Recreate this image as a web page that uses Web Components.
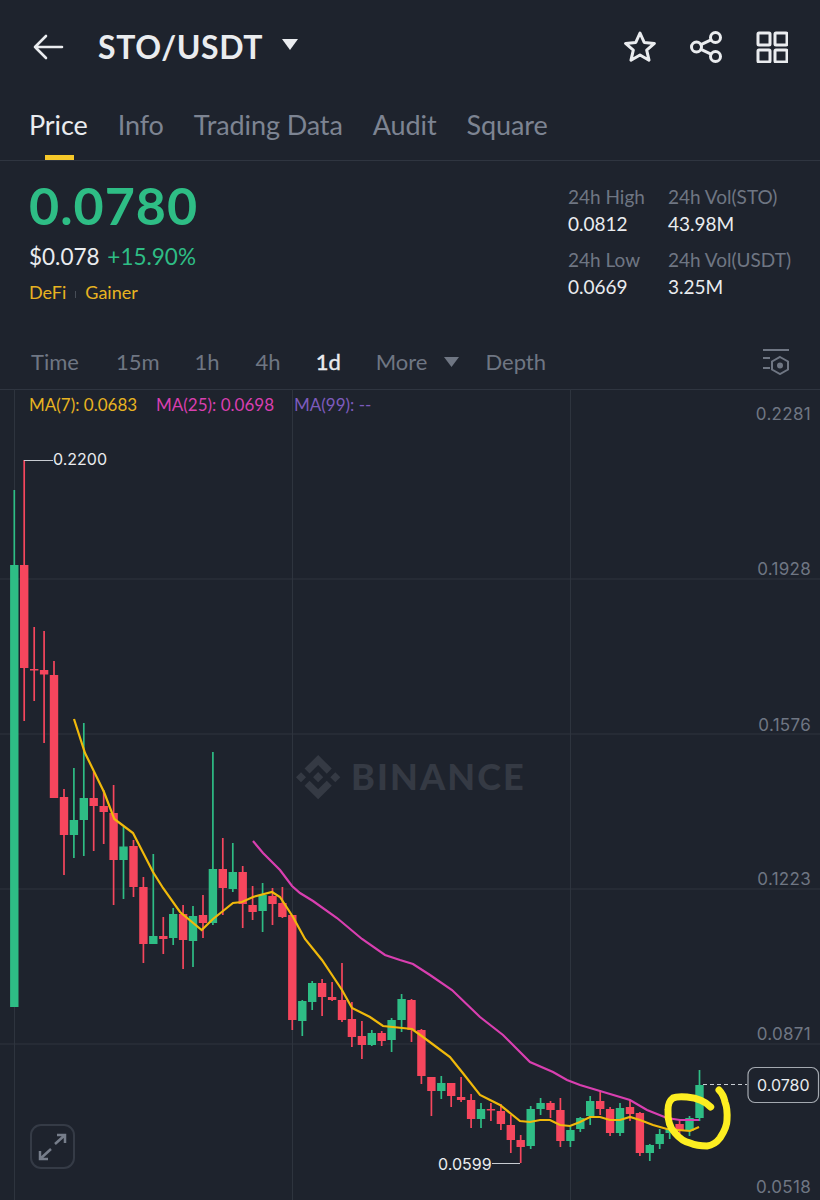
<!DOCTYPE html>
<html>
<head>
<meta charset="utf-8">
<title>STO/USDT</title>
<style>
  html, body { margin: 0; padding: 0; background: #1e232d; }
  body { width: 820px; height: 1200px; overflow: hidden; font-family: Lato, "Liberation Sans", sans-serif; color: #eaecef; }
</style>
</head>
<body>
<pair-header pair="STO/USDT"></pair-header>
<market-tabs items="Price,Info,Trading Data,Audit,Square" active="Price"></market-tabs>
<price-summary>
  <stat-item slot="stats" label="24h High" value="0.0812"></stat-item>
  <stat-item slot="stats" label="24h Vol(STO)" value="43.98M"></stat-item>
  <stat-item slot="stats" label="24h Low" value="0.0669"></stat-item>
  <stat-item slot="stats" label="24h Vol(USDT)" value="3.25M"></stat-item>
</price-summary>
<interval-bar></interval-bar>
<kline-chart></kline-chart>

<script>
class PairHeader extends HTMLElement {
  constructor() {
    super();
    this.attachShadow({ mode: "open" });
  }

  connectedCallback() {
    this.shadowRoot.innerHTML = `
      <style>
        :host { display: flex; align-items: center; height: 94px; padding: 0 32px 0 33px; box-sizing: border-box; }
        svg { display: block; fill: none; stroke: #eaecef; stroke-width: 3; stroke-linejoin: round; stroke-linecap: round; }
        .back { margin-right: 34px; stroke-width: 2.600; }
        h1 { margin: 0; font: 700 32px/1 Lato, sans-serif; letter-spacing: 0.600px; color: #eaecef; }
        .caret { margin: -6px 0 0 19px; fill: #eaecef; stroke: none; }
        .icons { margin-left: auto; display: flex; gap: 34px; }
      </style>
      <svg class="back" width="31" height="26" viewBox="0 0 31 26"><path d="M29 13H2M13 2 2 13l11 11"/></svg>
      <h1>${this.getAttribute("pair")}</h1>
      <svg class="caret" width="16" height="11" viewBox="0 0 16 11"><path d="M0 0h16l-8 11z"/></svg>
      <div class="icons">
        <svg width="32" height="32" viewBox="0 0 32 32"><path d="M16 2l4.200 9.400 10.200 1-7.700 6.800 2.300 10-9-5.200-9 5.200 2.300-10-7.700-6.800 10.200-1z"/></svg>
        <svg width="32" height="32" viewBox="0 0 32 32"><circle cx="6.500" cy="16" r="5"/><circle cx="25.500" cy="6.500" r="5"/><circle cx="25.500" cy="25.500" r="5"/><path d="M11 13.700 21 8.800M11 18.300l10 4.900"/></svg>
        <svg width="32" height="32" viewBox="0 0 32 32"><rect x="2" y="2" width="12" height="12" rx="1"/><rect x="19" y="2" width="12" height="12" rx="1"/><rect x="2" y="19" width="12" height="12" rx="1"/><rect x="19" y="19" width="12" height="12" rx="1"/></svg>
      </div>`;
  }
}

class MarketTabs extends HTMLElement {
  constructor() {
    super();
    this.attachShadow({ mode: "open" });
  }

  connectedCallback() {
    const active = this.getAttribute("active");
    const tabs = this.getAttribute("items").split(",").map((name) =>
      `<span class="tab ${name === active ? "on" : ""}">${name}</span>`).join("");
    this.shadowRoot.innerHTML = `
      <style>
        :host { display: flex; gap: 30px; height: 67px; padding: 14px 0 0 29px; box-sizing: border-box; border-bottom: 1px solid #2f3540; }
        .tab { position: relative; font: 400 27px/34px Lato, sans-serif; letter-spacing: -0.100px; color: #7d8492; }
        .on { color: #eaecef; }
        .on::after { content: ""; position: absolute; left: 16px; width: 29px; top: 47px; height: 5px; background: #f6c829; }
      </style>${tabs}`;
  }
}

class StatItem extends HTMLElement {
  constructor() {
    super();
    this.attachShadow({ mode: "open" });
  }

  connectedCallback() {
    this.shadowRoot.innerHTML = `
      <style>
        :host { display: block; font: 400 19px/27px Lato, sans-serif; white-space: nowrap; }
        .label { color: #6f7683; }
        .value { color: #eaecef; }
      </style>
      <div class="label">${this.getAttribute("label")}</div>
      <div class="value">${this.getAttribute("value")}</div>`;
  }
}

class PriceSummary extends HTMLElement {
  constructor() {
    super();
    this.attachShadow({ mode: "open" });
  }

  connectedCallback() {
    this.shadowRoot.innerHTML = `
      <style>
        :host { display: flex; justify-content: space-between; height: 179px; box-sizing: border-box; padding: 19px 0 0 29px; }
        .price { font: 700 52px/50px Lato, sans-serif; letter-spacing: 1px; color: #2ebd85; }
        .sub { margin-top: 13px; font: 400 22.500px/28px Lato, sans-serif; color: #eaecef; }
        .sub b { font-weight: 400; color: #2ebd85; margin-left: 2px; }
        .tags { display: flex; align-items: center; margin-top: 7px; font: 400 18px/28px Lato, sans-serif; color: #e8b321; }
        .tags i { width: 1px; height: 7px; margin: 5px 9px 0; background: #474d57; }
        .stats { display: grid; grid-template-columns: 100px 152px; row-gap: 9px; align-content: start; margin-top: 3px; }
      </style>
      <div>
        <div class="price">0.0780</div>
        <div class="sub">$0.078 <b>+15.90%</b></div>
        <div class="tags"><span>DeFi</span><i></i><span>Gainer</span></div>
      </div>
      <div class="stats"><slot name="stats"></slot></div>`;
  }
}

class IntervalBar extends HTMLElement {
  constructor() {
    super();
    this.attachShadow({ mode: "open" });
  }

  connectedCallback() {
    this.shadowRoot.innerHTML = `
      <style>
        :host { display: flex; align-items: center; height: 49px; box-sizing: border-box; padding: 0 30px 5px 31px; font: 400 22px/30px Lato, sans-serif; color: #6f7683; }
        span { margin-right: 35px; }
        span:nth-of-type(1) { margin-right: 37px; }
        span:nth-of-type(3) { margin-right: 36px; }
        .on { color: #eaecef; -webkit-text-stroke: 0.400px #eaecef; }
        .more { margin-right: 0; }
        .caret { margin: 0 26px 0 17px; fill: #6f7683; }
        .tool { margin-left: auto; fill: none; stroke: #6f7683; stroke-width: 2; }
      </style>
      <span>Time</span><span>15m</span><span>1h</span><span>4h</span><span class="on">1d</span>
      <span class="more">More</span>
      <svg class="caret" width="15" height="10" viewBox="0 0 15 10"><path d="M0 0h15l-7.500 10z"/></svg>
      <span>Depth</span>
      <svg class="tool" width="29" height="26" viewBox="0 0 29 26"><path d="M2 1h26M2 9h7M2 19h7"/><path d="M19 8l8 4.500v8L19 25l-8-4.500v-8z"/><circle cx="19" cy="16.500" r="2" fill="#6f7683"/></svg>`;
  }
}

// high, body top, body bottom, low, up
const CANDLES = [
  [490, 565, 1007, 1007, 1], [460, 565, 668, 721, 0], [627, 669, 670, 701, 0], [631, 670, 674.5, 743, 0],
  [661, 675, 798, 798, 0], [789, 797, 835, 875, 0], [768, 820, 835, 858, 1], [723, 798, 820, 856, 1],
  [772, 798, 806, 851, 0], [790, 806, 812, 844, 0], [785, 813, 860, 905, 0], [827, 846.5, 860, 899, 1],
  [840, 846, 887, 897, 0], [877, 887, 944, 963, 0], [854, 936, 944, 944, 1], [917, 936, 939, 954, 0],
  [908, 914, 938, 945, 1], [905, 914, 940, 969, 0], [906, 916, 941, 967, 1], [895, 915, 923, 938, 0],
  [752, 869, 923, 925, 1], [838, 869, 888, 915, 0], [843, 872, 889, 892, 1], [866, 872, 904, 928, 0],
  [886, 905, 912, 920, 0], [883, 895, 911, 932, 1], [888, 896, 904, 925, 0], [887, 903, 917, 918, 0],
  [915, 915, 1020, 1030, 0], [1000, 1001, 1021, 1036, 1], [981, 983, 1002, 1010, 1], [979, 983, 997, 1016, 0],
  [982, 997, 1000, 1001, 0], [963, 1000, 1020, 1022, 0], [1002, 1019, 1037, 1047, 0], [1021, 1036, 1045, 1059, 0],
  [1030, 1033, 1045, 1046, 1], [1031, 1033, 1041, 1046, 0], [1018, 1020, 1040, 1052, 1], [994, 999, 1020, 1032, 1],
  [999, 1000, 1030, 1042, 0], [1029, 1030, 1076, 1084, 0], [1077, 1077, 1091, 1116, 0], [1076, 1083, 1091, 1099, 1],
  [1083, 1083, 1096, 1107, 0], [1077, 1097, 1100, 1102, 0], [1094, 1100, 1119, 1128, 0], [1103, 1109, 1119, 1128, 1],
  [1103, 1109, 1110, 1121, 0], [1104, 1111, 1124, 1130, 0], [1115, 1125, 1140, 1153, 0], [1135, 1140, 1147, 1163, 0],
  [1106, 1109, 1146, 1149, 1], [1098, 1103, 1109, 1115, 1], [1101, 1103, 1110, 1118, 0], [1098, 1110, 1141, 1147, 0],
  [1127, 1130, 1141, 1147, 1], [1117, 1118, 1129, 1132, 1], [1096, 1101, 1116, 1125, 1], [1090, 1101, 1109, 1115, 0],
  [1107, 1109, 1133, 1136, 0], [1103, 1108, 1133, 1136, 1], [1100, 1107, 1114, 1121, 0], [1112, 1113, 1153, 1156, 0],
  [1144, 1145, 1153, 1161, 1], [1129, 1134, 1144, 1149, 1], [1124, 1128, 1133, 1139, 1], [1120, 1124, 1131, 1134, 0],
  [1116, 1118, 1131, 1136, 1], [1070, 1085, 1118, 1121, 1],
];

const MA7 = "74,719 85,753 104,792 114.300,819 133,833 153,872 163,888 180,912 201.700,930 213,919 233,903 242,902 253,897 272,892 280,897 293,917 305,939 322,960 342,990 352,1008 370,1017 383,1026 412,1029 423,1037 450,1057 462,1072 480,1095 500,1105 520,1121 530,1122 540,1120 550,1120 560,1125 570,1126 580,1122 590,1117 600,1117 610,1120 620,1120 630,1117 640,1120 653,1125 667,1129 690,1131 699,1127";
const MA25 = "253,841 263,853 280,870 292,886 300,893 313,901 337,918 362,939 385,955 400,960 413,964 430,975 452,990 480,1017 503,1035 530,1062 553,1072 567,1080 580,1085 600,1091 630,1100 647,1110 667,1118 680,1120 699,1120";

class KlineChart extends HTMLElement {
  constructor() {
    super();
    this.attachShadow({ mode: "open" });
  }

  connectedCallback() {
    const grid = [579, 734, 889, 1044].map((y) => `<path d="M0 ${y}H820"/>`).join("") +
      [14.5, 292.5, 570.5].map((x) => `<path d="M${x} 389V1200"/>`).join("");

    const candles = CANDLES.map((c, i) => {
      const x = (14.3 + i * 9.93).toFixed(1);
      const color = c[4] ? "#2ebd85" : "#f6465d";
      const h = Math.max(c[2] - c[1], 1.5);
      return `<path d="M${x} ${c[0]}V${c[3]}" stroke="${color}" stroke-width="1.700"/>` +
        `<rect x="${x - 4.2}" y="${c[1]}" width="8.400" height="${h}" fill="${color}"/>`;
    }).join("");

    const scale = [[414, "0.2281"], [569, "0.1928"], [725, "0.1576"], [879, "0.1223"], [1034, "0.0871"], [1187, "0.0518"]]
      .map(([y, t]) => `<text x="811" y="${y}" text-anchor="end" dominant-baseline="central">${t}</text>`).join("");

    this.shadowRoot.innerHTML = `
      <style>
        :host { display: block; position: relative; height: 811px; border-top: 1px solid #2f3540; box-sizing: border-box; }
        svg.plot { display: block; position: absolute; left: 0; top: -1px; }
        .grid path { stroke: #2e343e; stroke-width: 1; fill: none; }
        .scale text { font: 400 17px Inter, sans-serif; letter-spacing: 0.300px; fill: #6f7683; }
        .mark { font: 400 16px Inter, sans-serif; fill: #eaecef; }
        .legend { position: absolute; left: 29px; top: 5px; display: flex; font: 400 17px/20px Lato, sans-serif; white-space: nowrap; }
        .legend span:nth-child(1) { width: 127px; color: #e8b321; }
        .legend span:nth-child(2) { width: 138px; color: #d93fb0; }
        .legend span:nth-child(3) { color: #7d5bbd; }
        .expand { position: absolute; left: 30px; top: 734px; width: 45px; height: 45px; box-sizing: border-box; border: 2px solid #353b46; border-radius: 11px; }
        .expand svg { display: block; fill: none; stroke: #767d8a; stroke-width: 2.500; }
      </style>
      <svg class="plot" width="820" height="811" viewBox="0 389 820 811">
        <g class="grid">${grid}</g>
        <g transform="translate(296 755) scale(0.35)" fill="#353a44"><path d="M38.730 53.200l24.590-24.580 24.600 24.600 14.300-14.310L63.320 0 24.420 38.900l14.310 14.300zM0 63.310l14.300-14.310 14.310 14.310-14.310 14.300zM38.730 73.410l24.590 24.590 24.600-24.600 14.310 14.290-38.900 38.910-38.910-38.880-.020-.020zM97.990 63.310l14.300-14.310 14.320 14.300-14.310 14.320zM77.830 63.300L63.320 48.780 52.590 59.510l-1.240 1.230-2.540 2.540 14.510 14.500 14.510-14.470z"/></g>
        <text x="351" y="790" font-family="Lato, sans-serif" font-weight="900" font-size="36" letter-spacing="2.100" fill="#353a44">BINANCE</text>
        <g class="scale">${scale}</g>
        ${candles}
        <polyline points="${MA25}" fill="none" stroke="#d93fb0" stroke-width="2.200"/>
        <polyline points="${MA7}" fill="none" stroke="#f0b90b" stroke-width="2.200"/>
        <path d="M24 460.500H53" stroke="#c8ccd2" stroke-width="1"/>
        <text class="mark" x="53" y="459" dominant-baseline="central">0.2200</text>
        <path d="M492 1163.500H520" stroke="#c8ccd2" stroke-width="1"/>
        <text class="mark" x="438" y="1164" dominant-baseline="central">0.0599</text>
        <path d="M703 1084.500H747" stroke="#c8ccd2" stroke-width="1" stroke-dasharray="4 3"/>
        <rect x="748" y="1067.500" width="70.500" height="35" rx="7" fill="#1e232d" stroke="#a4a9b0" stroke-width="1.200"/>
        <text class="mark" x="757" y="1084.500" dominant-baseline="central">0.0780</text>
        <path d="M710.700 1107C706 1102 697 1098 687 1097C680 1096.500 675 1097 673 1098C669 1101 668 1104 668 1110C667.500 1120 670 1128 675 1133C680 1139 685 1142 690 1143C697 1146 702 1146 707 1146C714 1145 717 1142 720 1138C724 1132 727 1127 727 1120C727.500 1112 727 1107 725 1102C724 1097 722 1093 719 1090" fill="none" stroke="#fdee21" stroke-width="7" stroke-linecap="round" stroke-linejoin="round"/>
      </svg>
      <div class="legend"><span>MA(7): 0.0683</span><span>MA(25): 0.0698</span><span>MA(99): --</span></div>
      <div class="expand"><svg width="41" height="41" viewBox="0 0 41 41"><path d="M33 9 23 18M25 9h8v8M8 33l11-10M8 25v8h8"/></svg></div>`;
  }
}

customElements.define("pair-header", PairHeader);
customElements.define("market-tabs", MarketTabs);
customElements.define("stat-item", StatItem);
customElements.define("price-summary", PriceSummary);
customElements.define("interval-bar", IntervalBar);
customElements.define("kline-chart", KlineChart);
</script>
</body>
</html>
